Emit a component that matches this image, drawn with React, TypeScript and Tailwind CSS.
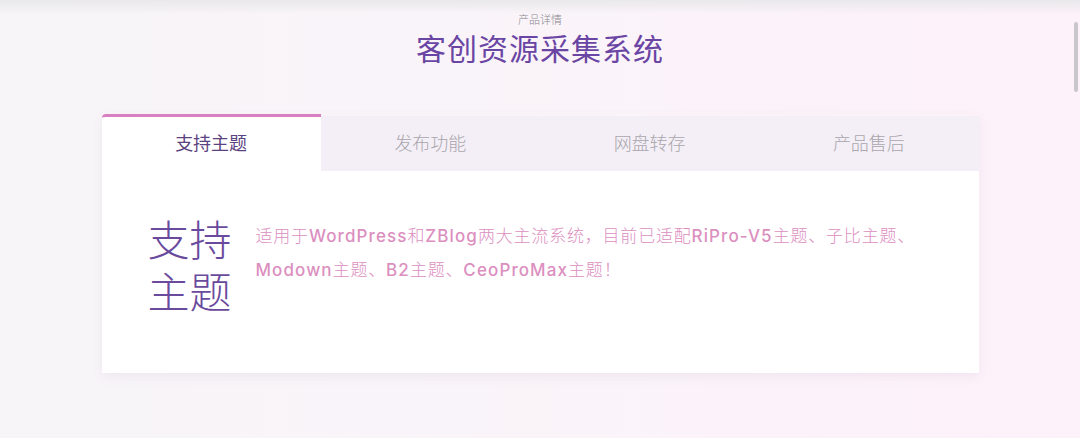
import { useState } from 'react'

const TABS = ['支持主题', '发布功能', '网盘转存', '产品售后']

function En({ children }: { children: string }) {
  return <span className="font-medium tracking-[1.1px]">{children}</span>
}

export default function App() {
  const [active, setActive] = useState(0)

  return (
    <div className="relative h-[438px] w-[1080px] overflow-hidden bg-gradient-to-r from-[#f7f5f8] via-[#faf4f9] to-[#fdf1fa] font-['Inter','Noto_Sans_CJK_SC',sans-serif]">
      {/* top fade from the header above */}
      <div className="absolute inset-x-0 top-0 h-[14px] bg-gradient-to-b from-[#e9e8ea] to-transparent" />
      {/* scrollbar thumb */}
      <div className="absolute right-[2px] top-[22px] h-[70px] w-[4px] rounded-full bg-[#c9c7ca]" />

      <div className="flex flex-col items-center pt-[12px]">
        <p className="text-[11px] leading-[16px] font-light text-[#8a8890]">产品详情</p>
        <h1 className="mt-[1px] text-[30px] leading-[40px] tracking-[1px] text-[#6a45a3]">客创资源采集系统</h1>
      </div>

      <div className="mx-auto mt-[45px] w-[877px] shadow-[0_4px_10px_rgba(120,90,130,0.08)]">
        <div className="flex h-[57px] items-end">
          {TABS.map((t, i) => (
            <button
              key={t}
              onClick={() => setActive(i)}
              className={
                i === active
                  ? 'flex h-[57px] flex-1 items-center justify-center rounded-tl-[4px] border-t-[3px] border-[#d77fc0] bg-white pb-[1px] text-[18px] text-[#5b4280]'
                  : 'flex h-[55px] flex-1 items-center justify-center bg-[#f4eff6] text-[18px] font-light text-[#a9a6ad]'
              }
            >
              {t}
            </button>
          ))}
        </div>

        <div className="flex h-[202px] bg-white pl-[46px] pr-[40px] pt-[44px]">
          <div className="w-[108px] shrink-0 text-[42px] leading-[52px] font-light text-[#6a4a9d]">
            支持
            <br />
            主题
          </div>
          <p className="pt-[4px] text-[17px] leading-[34px] font-light tracking-[0.8px] text-[#dc8fbf]">
            适用于<En>WordPress</En>和<En>ZBlog</En>两大主流系统，目前已适配<En>RiPro-V5</En>主题、子比主题、
            <br />
            <En>Modown</En>主题、<En>B2</En>主题、<En>CeoProMax</En>主题！
          </p>
        </div>
      </div>
    </div>
  )
}
